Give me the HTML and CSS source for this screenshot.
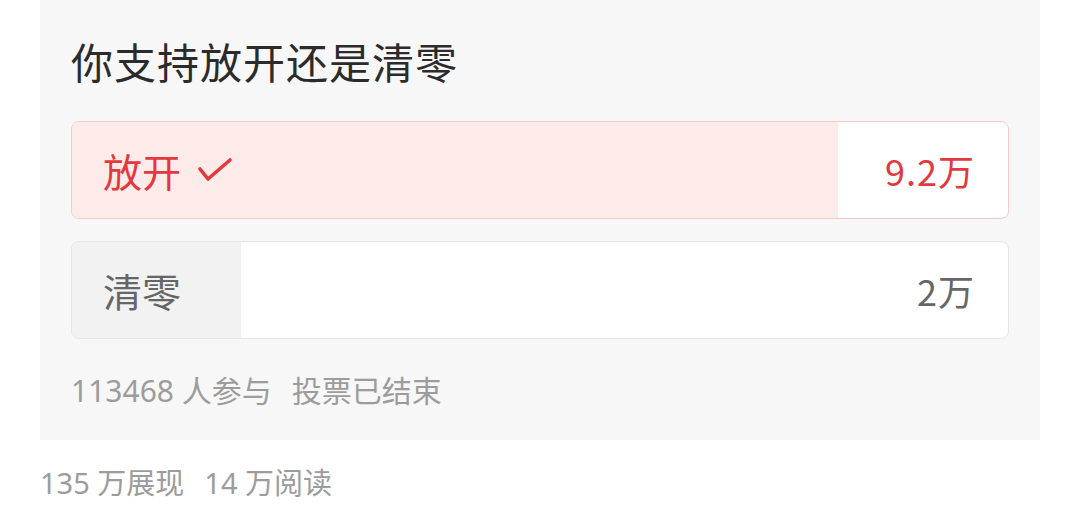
FILE: index.html
```html
<!DOCTYPE html>
<html lang="zh-CN">
<head>
    <meta charset="UTF-8">
    <meta name="viewport" content="width=device-width, initial-scale=1.0">
    <title>投票</title>
    <link rel="stylesheet" href="styles.css">
</head>
<body>
    <div class="page">
        <!-- Vote card -->
        <div class="vote-card">
            <h2 class="vote-title">你支持放开还是清零</h2>

            <div class="option option-chosen">
                <div class="option-fill" style="width: 81.8%;"></div>
                <span class="option-label">放开
                    <svg class="check" width="36" height="26" viewBox="0 0 36 26">
                        <polyline points="3,12 11,22 33,3" fill="none" stroke="#e3393e" stroke-width="3.6" stroke-linecap="round" stroke-linejoin="round"/>
                    </svg>
                </span>
                <span class="option-count">9.2万</span>
            </div>

            <div class="option">
                <div class="option-fill" style="width: 18.1%;"></div>
                <span class="option-label">清零</span>
                <span class="option-count">2万</span>
            </div>

            <p class="vote-meta">113468 人参与<span class="gap"></span>投票已结束</p>
        </div>

        <p class="stats">135 万展现<span class="gap"></span>14 万阅读</p>
    </div>
</body>
</html>
```

FILE: styles.css
```css
body {
    margin: 0;
    background: #ffffff;
    font-family: "Noto Sans CJK SC", "Noto Sans", sans-serif;
}
.page {
    padding: 0 40px;
}
.vote-card {
    background: #f7f7f7;
    padding: 33px 31px 29px;
}
.vote-title {
    margin: 0 0 32px;
    font-size: 42px;
    font-weight: 400;
    line-height: 56px;
    color: #2b2b2b;
    letter-spacing: 1px;
}
.option {
    position: relative;
    display: flex;
    align-items: center;
    justify-content: space-between;
    height: 96px;
    padding: 0 33px 0 31px;
    margin-bottom: 22px;
    background: #ffffff;
    border: 1px solid #e6e6e6;
    border-radius: 8px;
    overflow: hidden;
    color: #666666;
}
.option-fill {
    position: absolute;
    left: 0;
    top: 0;
    bottom: 0;
    background: #f2f2f2;
}
.option-chosen {
    border-color: #f6c9c9;
    color: #e3393e;
}
.option-chosen .option-fill {
    background: #fdebea;
}
.option-label,
.option-count {
    position: relative;
    display: flex;
    align-items: center;
}
.option-label {
    font-size: 39px;
}
.option-count {
    font-size: 36px;
    letter-spacing: 1px;
}
.check {
    margin-left: 16px;
}
.vote-meta,
.stats {
    font-family: "Noto Sans", "Noto Sans CJK SC", sans-serif;
    line-height: 40px;
    color: #9c9c9c;
}
.vote-meta {
    margin: 32px 0 0;
    font-size: 30px;
}
.stats {
    margin: 23px 0 0;
    font-size: 29px;
}
.gap {
    display: inline-block;
    width: 20px;
}
```
